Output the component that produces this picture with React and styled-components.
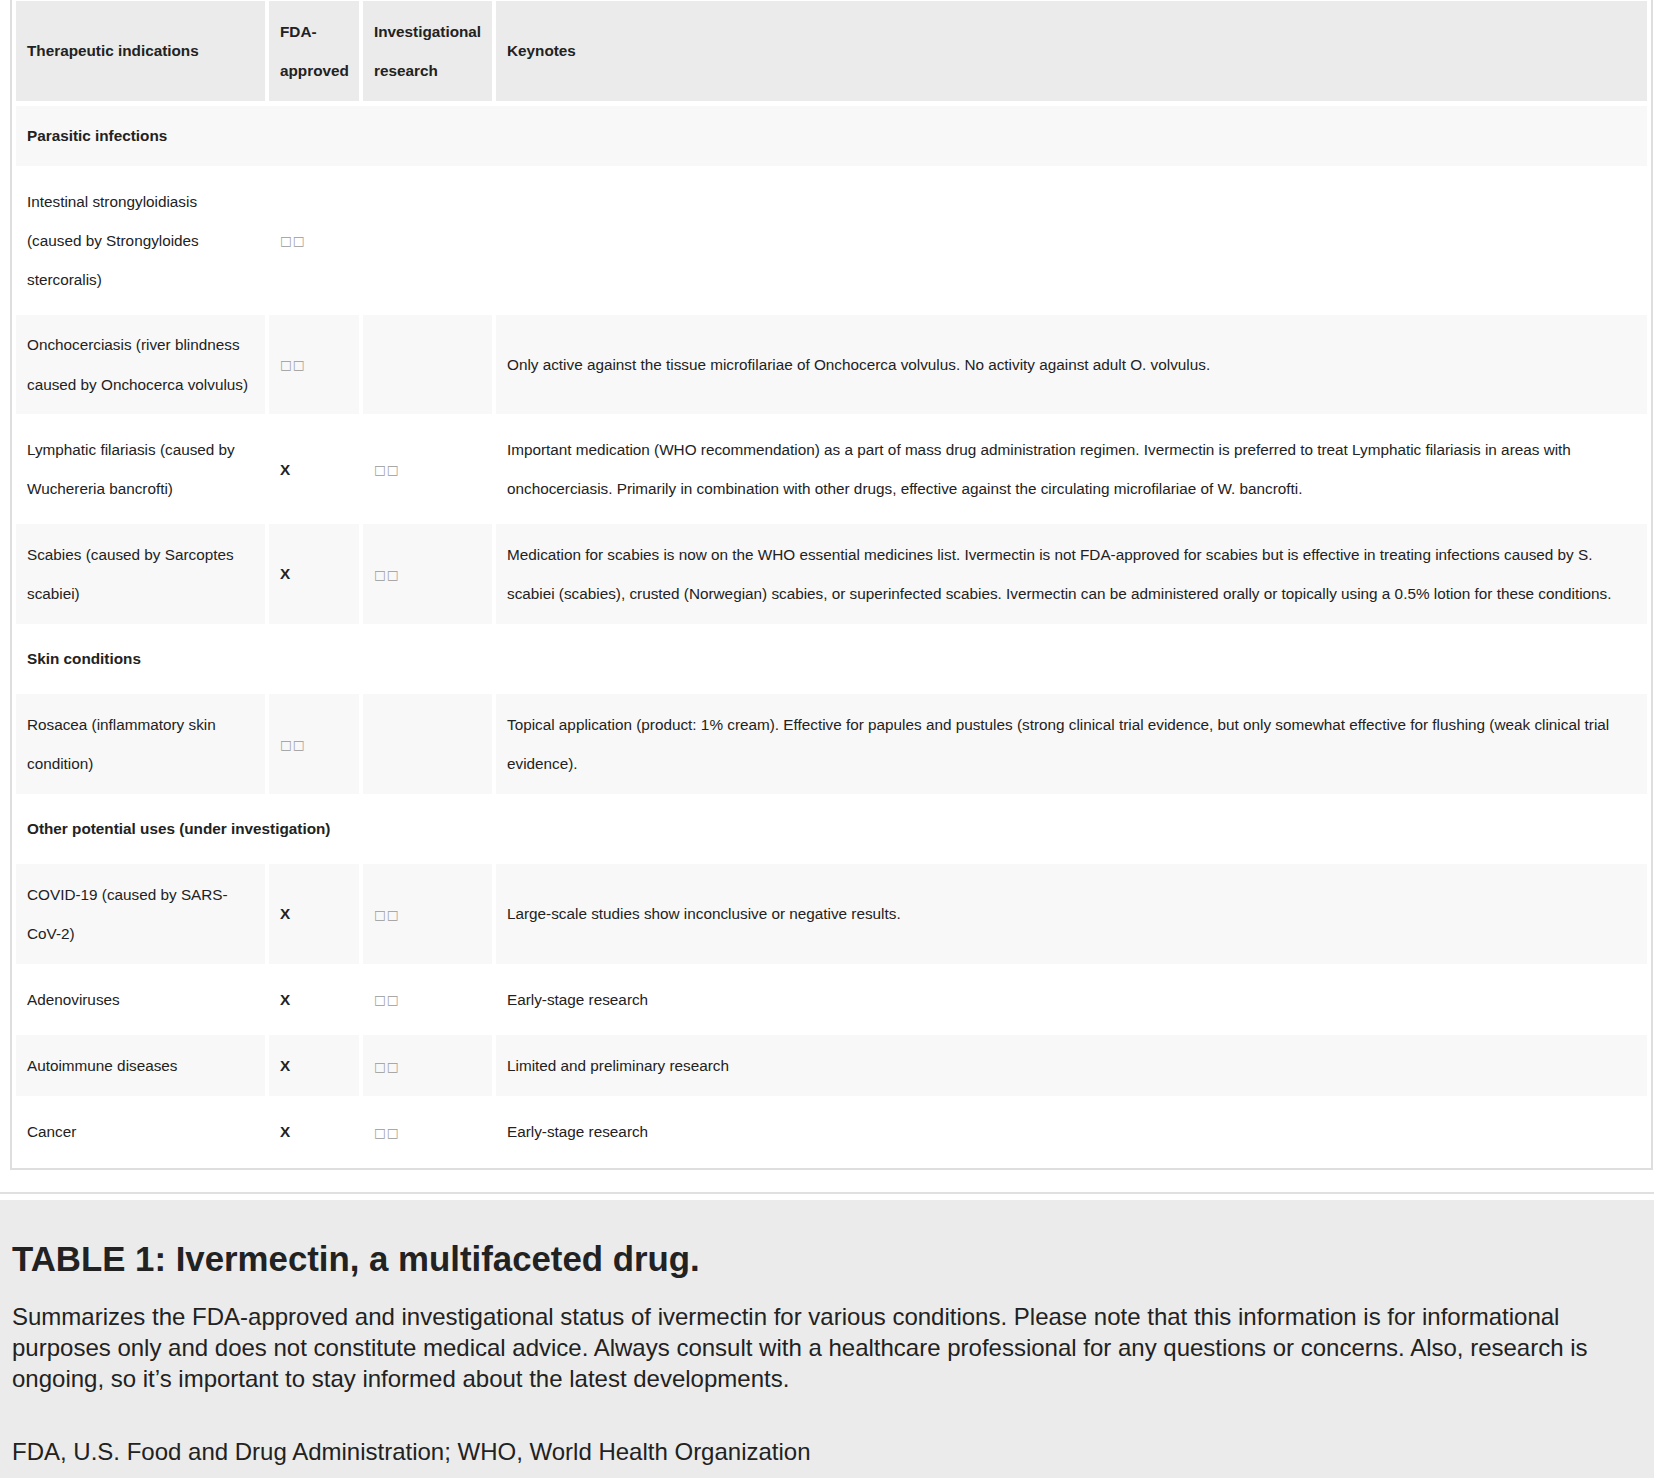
import React from 'react';
import styled, { createGlobalStyle } from 'styled-components';

const GlobalStyle = createGlobalStyle`
  html, body {
    margin: 0;
    padding: 0;
    background: #fff;
  }

  body {
    font-family: "Liberation Sans", Arial, sans-serif;
    color: #222;
  }
`;

const Page = styled.div`
  width: 1654px;
  overflow: hidden;
`;

const TableFrame = styled.div`
  margin: -6px 1px 0 10px;
  border: 2px solid #dedede;
`;

const Table = styled.table`
  width: 100%;
  table-layout: fixed;
  border-collapse: separate;
  border-spacing: 4px 5px;
  font-size: 15.3px;
  line-height: 39.2px;

  tbody tr:nth-child(odd) td {
    background: #f8f8f8;
  }
`;

const HeadCell = styled.th`
  box-sizing: border-box;
  width: ${({ $w }) => ($w ? `${$w}px` : 'auto')};
  padding: 10.6px 11px;
  background: #ebebeb;
  text-align: left;
  vertical-align: middle;
  font-weight: 700;
  color: #222;
`;

const Cell = styled.td`
  padding: 10.6px 11px;
  vertical-align: middle;
  text-align: left;
  font-weight: ${({ $bold }) => ($bold ? 700 : 400)};
  color: #222;
`;

const Tofu = styled.span`
  color: #9a9a9a;
  font-family: "DejaVu Sans", sans-serif;
  font-size: 12.5px;
  letter-spacing: 1px;
`;

const Divider = styled.div`
  margin-top: 22px;
  height: 2px;
  background: #e0e0e0;
`;

const Caption = styled.section`
  margin-top: 6px;
  background: #ebebeb;
  padding: 40px 12px 24px 12px;
`;

const Title = styled.h2`
  margin: 0;
  font-size: 34.8px;
  line-height: 37px;
  font-weight: 700;
  color: #222;
`;

const Summary = styled.p`
  margin: 24px 0 0;
  font-size: 24px;
  line-height: 31px;
  color: #222;
`;

const Footnote = styled.p`
  margin: 42px 0 0;
  font-size: 24px;
  line-height: 31px;
  color: #222;
`;

const check = <Tofu>□□</Tofu>;

const sections = [
  {
    title: 'Parasitic infections',
    rows: [
      ['Intestinal strongyloidiasis (caused by Strongyloides stercoralis)', 'check', '', ''],
      [
        'Onchocerciasis (river blindness caused by Onchocerca volvulus)',
        'check',
        '',
        'Only active against the tissue microfilariae of Onchocerca volvulus. No activity against adult O. volvulus.',
      ],
      [
        'Lymphatic filariasis (caused by Wuchereria bancrofti)',
        'X',
        'check',
        'Important medication (WHO recommendation) as a part of mass drug administration regimen. Ivermectin is preferred to treat Lymphatic filariasis in areas with onchocerciasis. Primarily in combination with other drugs, effective against the circulating microfilariae of W. bancrofti.',
      ],
      [
        'Scabies (caused by Sarcoptes scabiei)',
        'X',
        'check',
        'Medication for scabies is now on the WHO essential medicines list. Ivermectin is not FDA-approved for scabies but is effective in treating infections caused by S. scabiei (scabies), crusted (Norwegian) scabies, or superinfected scabies. Ivermectin can be administered orally or topically using a 0.5% lotion for these conditions.',
      ],
    ],
  },
  {
    title: 'Skin conditions',
    rows: [
      [
        'Rosacea (inflammatory skin condition)',
        'check',
        '',
        'Topical application (product: 1% cream). Effective for papules and pustules (strong clinical trial evidence, but only somewhat effective for flushing (weak clinical trial evidence).',
      ],
    ],
  },
  {
    title: 'Other potential uses (under investigation)',
    rows: [
      ['COVID-19 (caused by SARS-CoV-2)', 'X', 'check', 'Large-scale studies show inconclusive or negative results.'],
      ['Adenoviruses', 'X', 'check', 'Early-stage research'],
      ['Autoimmune diseases', 'X', 'check', 'Limited and preliminary research'],
      ['Cancer', 'X', 'check', 'Early-stage research'],
    ],
  },
];

const renderMark = (value) => {
  if (value === 'check') return check;
  return value;
};

const App = () => {
  return (
    <Page>
      <GlobalStyle />
      <TableFrame>
        <Table>
          <thead>
            <tr>
              <HeadCell $w={249}>Therapeutic indications</HeadCell>
              <HeadCell $w={90}>FDA-approved</HeadCell>
              <HeadCell $w={129}>Investigational research</HeadCell>
              <HeadCell>Keynotes</HeadCell>
            </tr>
          </thead>
          <tbody>
            {sections.map((section) => (
              <React.Fragment key={section.title}>
                <tr>
                  <Cell colSpan={4} $bold>
                    {section.title}
                  </Cell>
                </tr>
                {section.rows.map(([name, fda, research, note]) => (
                  <tr key={name}>
                    <Cell>{name}</Cell>
                    <Cell $bold={fda === 'X'}>{renderMark(fda)}</Cell>
                    <Cell $bold={research === 'X'}>{renderMark(research)}</Cell>
                    <Cell>{note}</Cell>
                  </tr>
                ))}
              </React.Fragment>
            ))}
          </tbody>
        </Table>
      </TableFrame>

      <Divider />

      <Caption>
        <Title>TABLE 1: Ivermectin, a multifaceted drug.</Title>
        <Summary>
          Summarizes the FDA-approved and investigational status of ivermectin for various conditions. Please note
          that this information is for informational purposes only and does not constitute medical advice. Always
          consult with a healthcare professional for any questions or concerns. Also, research is ongoing, so it’s
          important to stay informed about the latest developments.
        </Summary>
        <Footnote>FDA, U.S. Food and Drug Administration; WHO, World Health Organization</Footnote>
      </Caption>
    </Page>
  );
};

export default App;
